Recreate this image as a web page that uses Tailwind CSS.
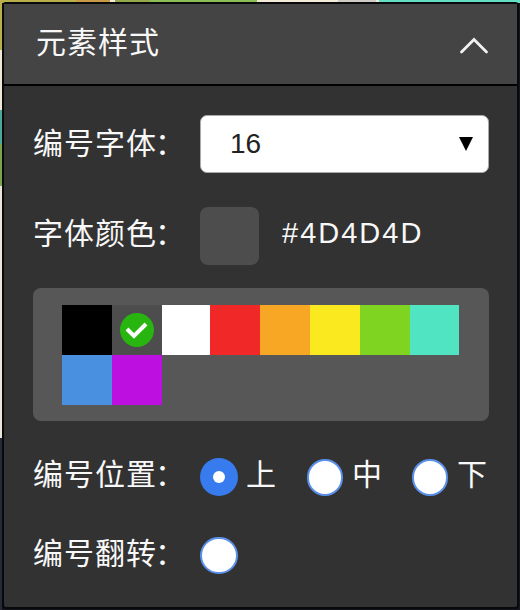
<!DOCTYPE html>
<html lang="zh-CN">
<head>
<meta charset="utf-8">
<title>元素样式</title>
<script src="https://cdn.jsdelivr.net/npm/@tailwindcss/browser@4"></script>
</head>
<body class="relative h-[610px] w-[520px] overflow-hidden bg-[#15151d] font-['Liberation_Sans','Noto_Sans_CJK_SC',sans-serif] text-[30px] text-[#f8f8f8]">
<!-- canvas edges visible around the panel -->
<div class="absolute top-0 left-0 flex h-[3px] w-full">
  <div class="w-[76px] bg-[#b9b04c]"></div><div class="w-[34px] bg-[#c89a45]"></div><div class="w-[5px] bg-[#f4eedc]"></div><div class="w-[35px] bg-[#94a84c]"></div><div class="w-[107px] bg-[#8bbd57]"></div><div class="w-[81px] bg-[#f4ead8]"></div><div class="w-[38px] bg-[#cfcac4]"></div><div class="w-[3px] bg-[#f4ead8]"></div><div class="flex-1 bg-[#62dfc4]"></div>
</div>
<div class="absolute top-0 left-0 flex h-full w-[2px] flex-col">
  <div class="h-[50px] bg-[#b9b04c]"></div><div class="h-[60px] bg-[#efe6d6]"></div><div class="h-[34px] bg-[#4aa899]"></div><div class="h-[42px] bg-[#7da24c]"></div><div class="h-[252px] bg-[#ece4d8]"></div><div class="flex-1 bg-[#252a36]"></div>
</div>
<main class="relative mt-[2px] ml-[2px] flex h-[607px] w-[517px] flex-col rounded-[4px] border-2 border-[#08090b] bg-[#323232] leading-none tracking-[1px]">
  <header class="flex h-[82px] shrink-0 items-center justify-between border-b-2 border-black bg-[#444444] pr-[28px] pl-8">
    <h1 class="pb-[2px]">元素样式</h1>
    <svg class="mt-[3px] h-[18px] w-[30px]" viewBox="0 0 30 18" fill="none" stroke="#f2f2f2" stroke-width="2.8" stroke-linecap="round" aria-hidden="true"><path d="M2.5 15 15 2.5 27.5 15"/></svg>
  </header>
  <section class="flex flex-col pr-[28px] pl-[29px]">
    <div class="mt-[29px] flex h-[58px] items-center">
      <span class="w-[167px] shrink-0 whitespace-nowrap">编号字体<span class="-ml-[2px]">：</span></span>
      <button class="flex h-[58px] flex-1 items-center justify-between rounded-[7px] border border-[#aaa] bg-white pr-[15px] pl-[29px] text-[28px] tracking-normal text-[#222]">
        <span>16</span>
        <svg class="h-[14px] w-[14px]" viewBox="0 0 14 14" aria-hidden="true"><path d="M0 0H14L7 14Z" fill="#000"/></svg>
      </button>
    </div>
    <div class="mt-[34px] flex h-[58px] items-center">
      <span class="w-[167px] shrink-0 pb-[5px] whitespace-nowrap">字体颜色<span class="-ml-[2px]">：</span></span>
      <span class="h-[58px] w-[59px] rounded-[8px] bg-[#4d4d4d]"></span>
      <span class="ml-[23px] pb-[6px] text-[29px] tracking-[2px]">#4D4D4D</span>
    </div>
    <div class="mt-[23px] h-[133px] rounded-[8px] bg-[#575757] pt-[17px] pl-[29px]">
      <div class="grid w-[398px] grid-cols-[50px_50px_48px_50px_50px_50px_50px_49px] grid-rows-[50px_50px]">
        <i class="bg-black"></i>
        <i class="flex items-center justify-center bg-[#4d4d4d]"><svg class="h-[34px] w-[34px]" viewBox="0 0 34 34" aria-hidden="true"><circle cx="17" cy="17" r="17" fill="#29b50f"/><path d="M7 16 14 23 26 11" fill="none" stroke="#fff" stroke-width="4"/></svg></i>
        <i class="bg-white"></i>
        <i class="bg-[#f02828]"></i>
        <i class="bg-[#f8a724]"></i>
        <i class="bg-[#f9e91e]"></i>
        <i class="bg-[#7ed420]"></i>
        <i class="bg-[#50e4c2]"></i>
        <i class="bg-[#4a90e1]"></i>
        <i class="bg-[#bd10e0]"></i>
      </div>
    </div>
    <div class="mt-[37px] flex h-[38px] items-center">
      <span class="w-[167px] shrink-0 pb-[4px] whitespace-nowrap">编号位置<span class="-ml-[2px]">：</span></span>
      <span class="flex h-[38px] w-[38px] items-center justify-center rounded-full bg-[#377bef]"><i class="h-[12px] w-[12px] rounded-full bg-white"></i></span>
      <span class="ml-[8px] w-[61px] pb-[4px]">上</span>
      <span class="h-[37px] w-[36px] rounded-full border-2 border-[#5b90ea] bg-white"></span>
      <span class="ml-[9px] w-[60px] pb-[4px]">中</span>
      <span class="h-[37px] w-[36px] rounded-full border-2 border-[#5b90ea] bg-white"></span>
      <span class="ml-[9px] pb-[4px]">下</span>
    </div>
    <div class="mt-[40px] flex h-[38px] items-center">
      <span class="w-[167px] shrink-0 pb-[2px] whitespace-nowrap">编号翻转<span class="-ml-[2px]">：</span></span>
      <span class="h-[37px] w-[38px] rounded-full border-2 border-[#5b90ea] bg-white"></span>
    </div>
  </section>
</main>
</body>
</html>
